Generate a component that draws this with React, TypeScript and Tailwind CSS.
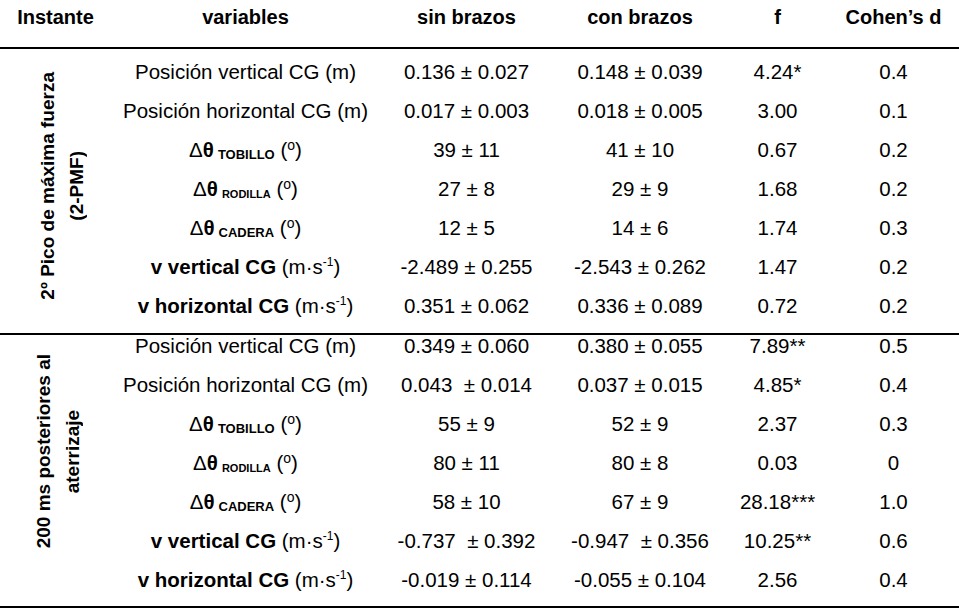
import { ReactNode } from 'react'

type Row = {
  label: ReactNode
  sin: string
  con: string
  f: string
  d: string
}

function Delta({ joint, small }: { joint: string; small?: boolean }) {
  return (
    <span>
      <span className="font-normal">Δ</span>
      <span className="font-bold">θ</span>
      <span className={`font-bold relative top-[2px] ml-[4px] ${small ? 'text-[11px]' : 'text-[13px]'}`}>{joint}</span>
      <span> (</span>
      <span className="relative -top-[7px] text-[14px]">o</span>
      <span>)</span>
    </span>
  )
}

function Vel({ dir }: { dir: string }) {
  return (
    <span>
      <span className="font-bold">v {dir} CG</span>
      <span> (m·s</span>
      <span className="relative -top-[8px] text-[12px]">-1</span>
      <span>)</span>
    </span>
  )
}

const group1: Row[] = [
  { label: 'Posición vertical CG (m)', sin: '0.136 ± 0.027', con: '0.148 ± 0.039', f: '4.24*', d: '0.4' },
  { label: 'Posición horizontal CG (m)', sin: '0.017 ± 0.003', con: '0.018 ± 0.005', f: '3.00', d: '0.1' },
  { label: <Delta joint="TOBILLO" />, sin: '39 ± 11', con: '41 ± 10', f: '0.67', d: '0.2' },
  { label: <Delta joint="RODILLA" small />, sin: '27 ± 8', con: '29 ± 9', f: '1.68', d: '0.2' },
  { label: <Delta joint="CADERA" />, sin: '12 ± 5', con: '14 ± 6', f: '1.74', d: '0.3' },
  { label: <Vel dir="vertical" />, sin: '-2.489 ± 0.255', con: '-2.543 ± 0.262', f: '1.47', d: '0.2' },
  { label: <Vel dir="horizontal" />, sin: '0.351 ± 0.062', con: '0.336 ± 0.089', f: '0.72', d: '0.2' },
]

const group2: Row[] = [
  { label: 'Posición vertical CG (m)', sin: '0.349 ± 0.060', con: '0.380 ± 0.055', f: '7.89**', d: '0.5' },
  { label: 'Posición horizontal CG (m)', sin: '0.043  ± 0.014', con: '0.037 ± 0.015', f: '4.85*', d: '0.4' },
  { label: <Delta joint="TOBILLO" />, sin: '55 ± 9', con: '52 ± 9', f: '2.37', d: '0.3' },
  { label: <Delta joint="RODILLA" small />, sin: '80 ± 11', con: '80 ± 8', f: '0.03', d: '0' },
  { label: <Delta joint="CADERA" />, sin: '58 ± 10', con: '67 ± 9', f: '28.18***', d: '1.0' },
  { label: <Vel dir="vertical" />, sin: '-0.737  ± 0.392', con: '-0.947  ± 0.356', f: '10.25**', d: '0.6' },
  { label: <Vel dir="horizontal" />, sin: '-0.019 ± 0.114', con: '-0.055 ± 0.104', f: '2.56', d: '0.4' },
]

function Rows({ rows }: { rows: Row[] }) {
  return (
    <>
      {rows.map((r, i) => (
        <div key={i} className="grid grid-cols-[269px_173px_174px_101px_131px] h-[39px] shrink-0 text-[20.5px] leading-[21px] text-center whitespace-pre">
          <div>{r.label}</div>
          <div>{r.sin}</div>
          <div>{r.con}</div>
          <div>{r.f}</div>
          <div>{r.d}</div>
        </div>
      ))}
    </>
  )
}

export default function App() {
  return (
    <div className="w-[959px] h-[608px] bg-white text-black overflow-hidden font-['Liberation_Sans',Arial,sans-serif] text-[20px]">
      {/* Header */}
      <div className="grid grid-cols-[111px_269px_173px_174px_101px_131px] h-[47px] pt-[6px] font-bold leading-[23px] text-center">
        <div>Instante</div>
        <div>variables</div>
        <div>sin brazos</div>
        <div>con brazos</div>
        <div>f</div>
        <div>Cohen’s d</div>
      </div>
      <div className="h-[2px] bg-black" />

      {/* 2-PMF */}
      <div className="flex h-[284px] overflow-hidden">
        <div className="w-[111px] shrink-0 flex items-center justify-center pl-[12px] pb-[10px]">
          <div className="[writing-mode:vertical-rl] rotate-180 font-bold text-[19px] leading-[29px] text-center">
            2º Pico de máxima fuerza
            <br />
            (2-PMF)
          </div>
        </div>
        <div className="flex flex-col pt-[12px]">
          <Rows rows={group1} />
        </div>
      </div>
      <div className="h-[2px] bg-black" />

      {/* 200 ms */}
      <div className="flex h-[271px] overflow-hidden">
        <div className="w-[111px] shrink-0 flex items-center justify-center pl-[4px] pb-[38px]">
          <div className="[writing-mode:vertical-rl] rotate-180 font-bold text-[19px] leading-[29px] text-center">
            200 ms posteriores al
            <br />
            aterrizaje
          </div>
        </div>
        <div className="flex flex-col">
          <Rows rows={group2} />
        </div>
      </div>
      <div className="h-[2px] bg-black" />
    </div>
  )
}
